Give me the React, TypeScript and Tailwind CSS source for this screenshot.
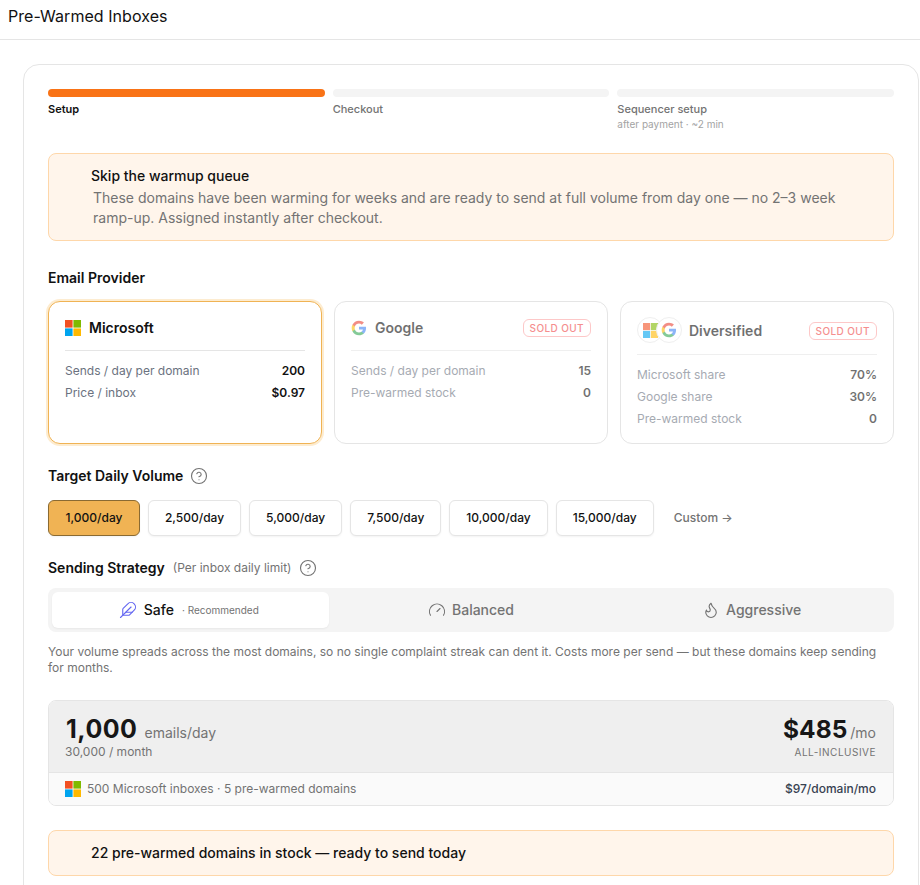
import { ReactNode } from "react";
import { CircleHelp, Feather, Flame, Gauge } from "lucide-react";

const MicrosoftLogo = ({ size = 16 }: { size?: number }) => (
  <svg width={size} height={size} viewBox="0 0 16 16" className="shrink-0">
    <rect x="0" y="0" width="7.6" height="7.6" fill="#f25022" />
    <rect x="8.4" y="0" width="7.6" height="7.6" fill="#7fba00" />
    <rect x="0" y="8.4" width="7.6" height="7.6" fill="#00a4ef" />
    <rect x="8.4" y="8.4" width="7.6" height="7.6" fill="#ffb900" />
  </svg>
);

const GoogleLogo = ({ size = 16 }: { size?: number }) => (
  <svg width={size} height={size} viewBox="0 0 24 24" className="shrink-0">
    <path fill="#4285F4" d="M22.56 12.25c0-.78-.07-1.53-.2-2.25H12v4.26h5.92c-.26 1.37-1.04 2.53-2.21 3.31v2.77h3.57c2.08-1.92 3.28-4.74 3.28-8.09z" />
    <path fill="#34A853" d="M12 23c2.97 0 5.46-.98 7.28-2.66l-3.57-2.77c-.98.66-2.23 1.06-3.71 1.06-2.86 0-5.29-1.93-6.16-4.53H2.18v2.84C3.99 20.53 7.7 23 12 23z" />
    <path fill="#FBBC05" d="M5.84 14.09c-.22-.66-.35-1.36-.35-2.09s.13-1.43.35-2.09V7.07H2.18C1.43 8.55 1 10.22 1 12s.43 3.45 1.18 4.93l2.85-2.22.81-.62z" />
    <path fill="#EA4335" d="M12 5.38c1.62 0 3.06.56 4.21 1.64l3.15-3.15C17.45 2.09 14.97 1 12 1 7.7 1 3.99 3.47 2.18 7.07l3.66 2.84c.87-2.6 3.3-4.53 6.16-4.53z" />
  </svg>
);

const SoldOut = () => (
  <span className="rounded-md border border-[#fca5a5] px-[6px] py-px text-[10px] leading-[14px] font-medium tracking-[0.4px] text-[#ef4444]">
    SOLD OUT
  </span>
);

const Row = ({ label, value }: { label: string; value: string }) => (
  <div className="flex items-center justify-between text-xs leading-4">
    <span className="text-[#6b7280]">{label}</span>
    <span className="font-semibold text-[#111]">{value}</span>
  </div>
);

const ProviderCard = ({
  icon,
  name,
  rows,
  selected,
  divider,
}: {
  icon: ReactNode;
  name: string;
  rows: [string, string][];
  selected?: boolean;
  divider: string;
}) => (
  <div
    className={
      selected
        ? "rounded-xl border border-[#f0b354] bg-white p-4 shadow-[0_0_0_2px_#fdecd0]"
        : "rounded-xl border border-[#e5e5e5] bg-white p-4"
    }
  >
    <div className={selected ? "" : "opacity-60"}>
      <div className={`flex items-center justify-between border-b border-[#e5e5e5] ${divider}`}>
        <div className="flex items-center gap-2">
          {icon}
          <span className="text-sm font-semibold text-[#111]">{name}</span>
        </div>
        {!selected && <SoldOut />}
      </div>
      <div className="mt-3 flex flex-col gap-[6px]">
        {rows.map(([label, value]) => (
          <Row key={label} label={label} value={value} />
        ))}
      </div>
    </div>
  </div>
);

const Step = ({ label, sub, active }: { label: string; sub?: string; active?: boolean }) => (
  <div>
    <div className={active ? "h-2 rounded-full bg-[#f97316]" : "h-2 rounded-full bg-[#f4f4f4]"} />
    <div className={active ? "mt-1 text-[11px] leading-4 font-semibold text-[#111]" : "mt-1 text-[11px] leading-4 font-medium text-[#737373]"}>
      {label}
    </div>
    {sub && <div className="text-[10px] leading-[14px] text-[#a3a3a3]">{sub}</div>}
  </div>
);

const volumes = ["1,000/day", "2,500/day", "5,000/day", "7,500/day", "10,000/day", "15,000/day"];

export default function App() {
  return (
    <div className="h-[885px] overflow-hidden bg-white font-['Inter',sans-serif] text-[#111]">
      <header className="flex h-10 items-start border-b border-[#e5e5e5] pl-2 pt-1">
        <h1 className="text-base leading-6 font-normal tracking-[0.05px]">Pre-Warmed Inboxes</h1>
      </header>

      <main className="pl-[23px] pr-px pt-6">
        <div className="rounded-2xl border border-[#e5e5e5] bg-white p-6">
          <div className="grid grid-cols-3 gap-2">
            <Step label="Setup" active />
            <Step label="Checkout" />
            <Step label="Sequencer setup" sub="after payment · ~2 min" />
          </div>

          <div className="mt-[22px] h-[88px] rounded-lg border border-[#fed7aa] bg-[#fff5eb] pl-[42px] pr-4 pt-3">
            <div className="text-sm leading-5 font-medium text-[#111]">Skip the warmup queue</div>
            <p className="ml-[2px] mt-[2px] text-sm leading-5 text-[#737373]">
              These domains have been warming for weeks and are ready to send at full volume from day one — no 2–3 week
              ramp-up. Assigned instantly after checkout.
            </p>
          </div>

          <div className="mt-[27px] text-sm leading-5 font-semibold">Email Provider</div>
          <div className="mt-[13px] grid h-[143px] grid-cols-3 gap-3">
            <ProviderCard
              selected
              divider="pb-3"
              icon={<MicrosoftLogo />}
              name="Microsoft"
              rows={[
                ["Sends / day per domain", "200"],
                ["Price / inbox", "$0.97"],
              ]}
            />
            <ProviderCard
              divider="pb-3"
              icon={<GoogleLogo />}
              name="Google"
              rows={[
                ["Sends / day per domain", "15"],
                ["Pre-warmed stock", "0"],
              ]}
            />
            <ProviderCard
              divider="pb-[11px]"
              icon={
                <div className="-mr-px -mt-px flex">
                  <div className="flex h-[26px] w-[26px] items-center justify-center rounded-full border border-[#e5e5e5] bg-white">
                    <MicrosoftLogo size={15} />
                  </div>
                  <div className="-ml-[7px] flex h-[26px] w-[26px] items-center justify-center rounded-full border border-[#e5e5e5] bg-white">
                    <GoogleLogo size={16} />
                  </div>
                </div>
              }
              name="Diversified"
              rows={[
                ["Microsoft share", "70%"],
                ["Google share", "30%"],
                ["Pre-warmed stock", "0"],
              ]}
            />
          </div>

          <div className="mt-[22px] flex items-center gap-[7px] text-sm leading-5 font-semibold">
            Target Daily Volume
            <CircleHelp size={18} strokeWidth={1.5} className="text-[#737373]" />
          </div>
          <div className="mt-[14px] flex items-center gap-2">
            {volumes.map((v, i) => (
              <button
                key={v}
                className={
                  i === 0
                    ? "h-9 rounded-md border border-[#8a6a32] bg-[#f0b354] px-[16.5px] text-xs font-medium text-[#111] shadow-xs"
                    : "h-9 rounded-md border border-[#e5e5e5] bg-white px-4 text-xs font-medium text-[#111] shadow-xs"
                }
              >
                {v}
              </button>
            ))}
            <span className="ml-3 text-xs font-medium text-[#737373]">Custom →</span>
          </div>

          <div className="mt-[22px] flex items-center gap-2 text-sm leading-5 font-semibold">
            Sending Strategy
            <span className="text-xs font-normal text-[#737373]">(Per inbox daily limit)</span>
            <CircleHelp size={18} strokeWidth={1.5} className="text-[#737373]" />
          </div>
          <div className="mt-[10px] grid h-11 grid-cols-3 gap-1 rounded-lg bg-[#f4f4f4] p-1">
            <div className="flex items-center justify-center gap-[7px] rounded-md bg-white pr-[3px] text-sm font-medium shadow-xs">
              <Feather size={18} strokeWidth={1.5} className="text-[#6366f1]" />
              <span>Safe</span>
              <span className="ml-px text-[10px] font-normal text-[#737373]">· Recommended</span>
            </div>
            <div className="flex items-center justify-center gap-[6px] text-sm font-medium text-[#737373]">
              <Gauge size={18} strokeWidth={1.5} />
              Balanced
            </div>
            <div className="flex items-center justify-center gap-[6px] text-sm font-medium text-[#737373]">
              <Flame size={18} strokeWidth={1.5} />
              Aggressive
            </div>
          </div>
          <p className="mt-3 text-xs leading-4 text-[#737373]">
            Your volume spreads across the most domains, so no single complaint streak can dent it. Costs more per send — but these domains keep sending for months.
          </p>

          <div className="mt-6 overflow-hidden rounded-lg border border-[#e5e5e5]">
            <div className="flex h-[71px] items-start justify-between bg-[#efefef] pl-4 pr-[17px] pt-3">
              <div>
                <div className="flex items-baseline gap-[7px]">
                  <span className="ml-px text-[25px] leading-8 font-bold tracking-[0.5px] text-[#171717]">1,000</span>
                  <span className="text-sm text-[#737373]">emails/day</span>
                </div>
                <div className="-mt-px text-xs leading-4 text-[#737373]">30,000 / month</div>
              </div>
              <div className="text-right">
                <div className="flex items-baseline justify-end gap-[3px]">
                  <span className="text-[24.5px] leading-8 font-bold text-[#171717]">$485</span>
                  <span className="text-sm text-[#737373]">/mo</span>
                </div>
                <div className="-mt-px text-[10px] leading-4 tracking-[0.5px] text-[#737373]">ALL-INCLUSIVE</div>
              </div>
            </div>
            <div className="flex h-[33px] items-center justify-between border-t border-[#e5e5e5] bg-[#fafafa] pl-4 pr-[17px]">
              <div className="flex items-center gap-1 text-xs text-[#737373]">
                <MicrosoftLogo />
                <span className="ml-[2px]">500 Microsoft inboxes · 5 pre-warmed domains</span>
              </div>
              <span className="text-xs font-medium text-[#374151]">$97/domain/mo</span>
            </div>
          </div>

          <div className="mt-6 flex h-[46px] items-center rounded-lg border border-[#fed7aa] bg-[#fff5eb] pl-[42px] text-sm font-medium text-[#111]">
            22 pre-warmed domains in stock — ready to send today
          </div>
        </div>
      </main>
    </div>
  );
}
